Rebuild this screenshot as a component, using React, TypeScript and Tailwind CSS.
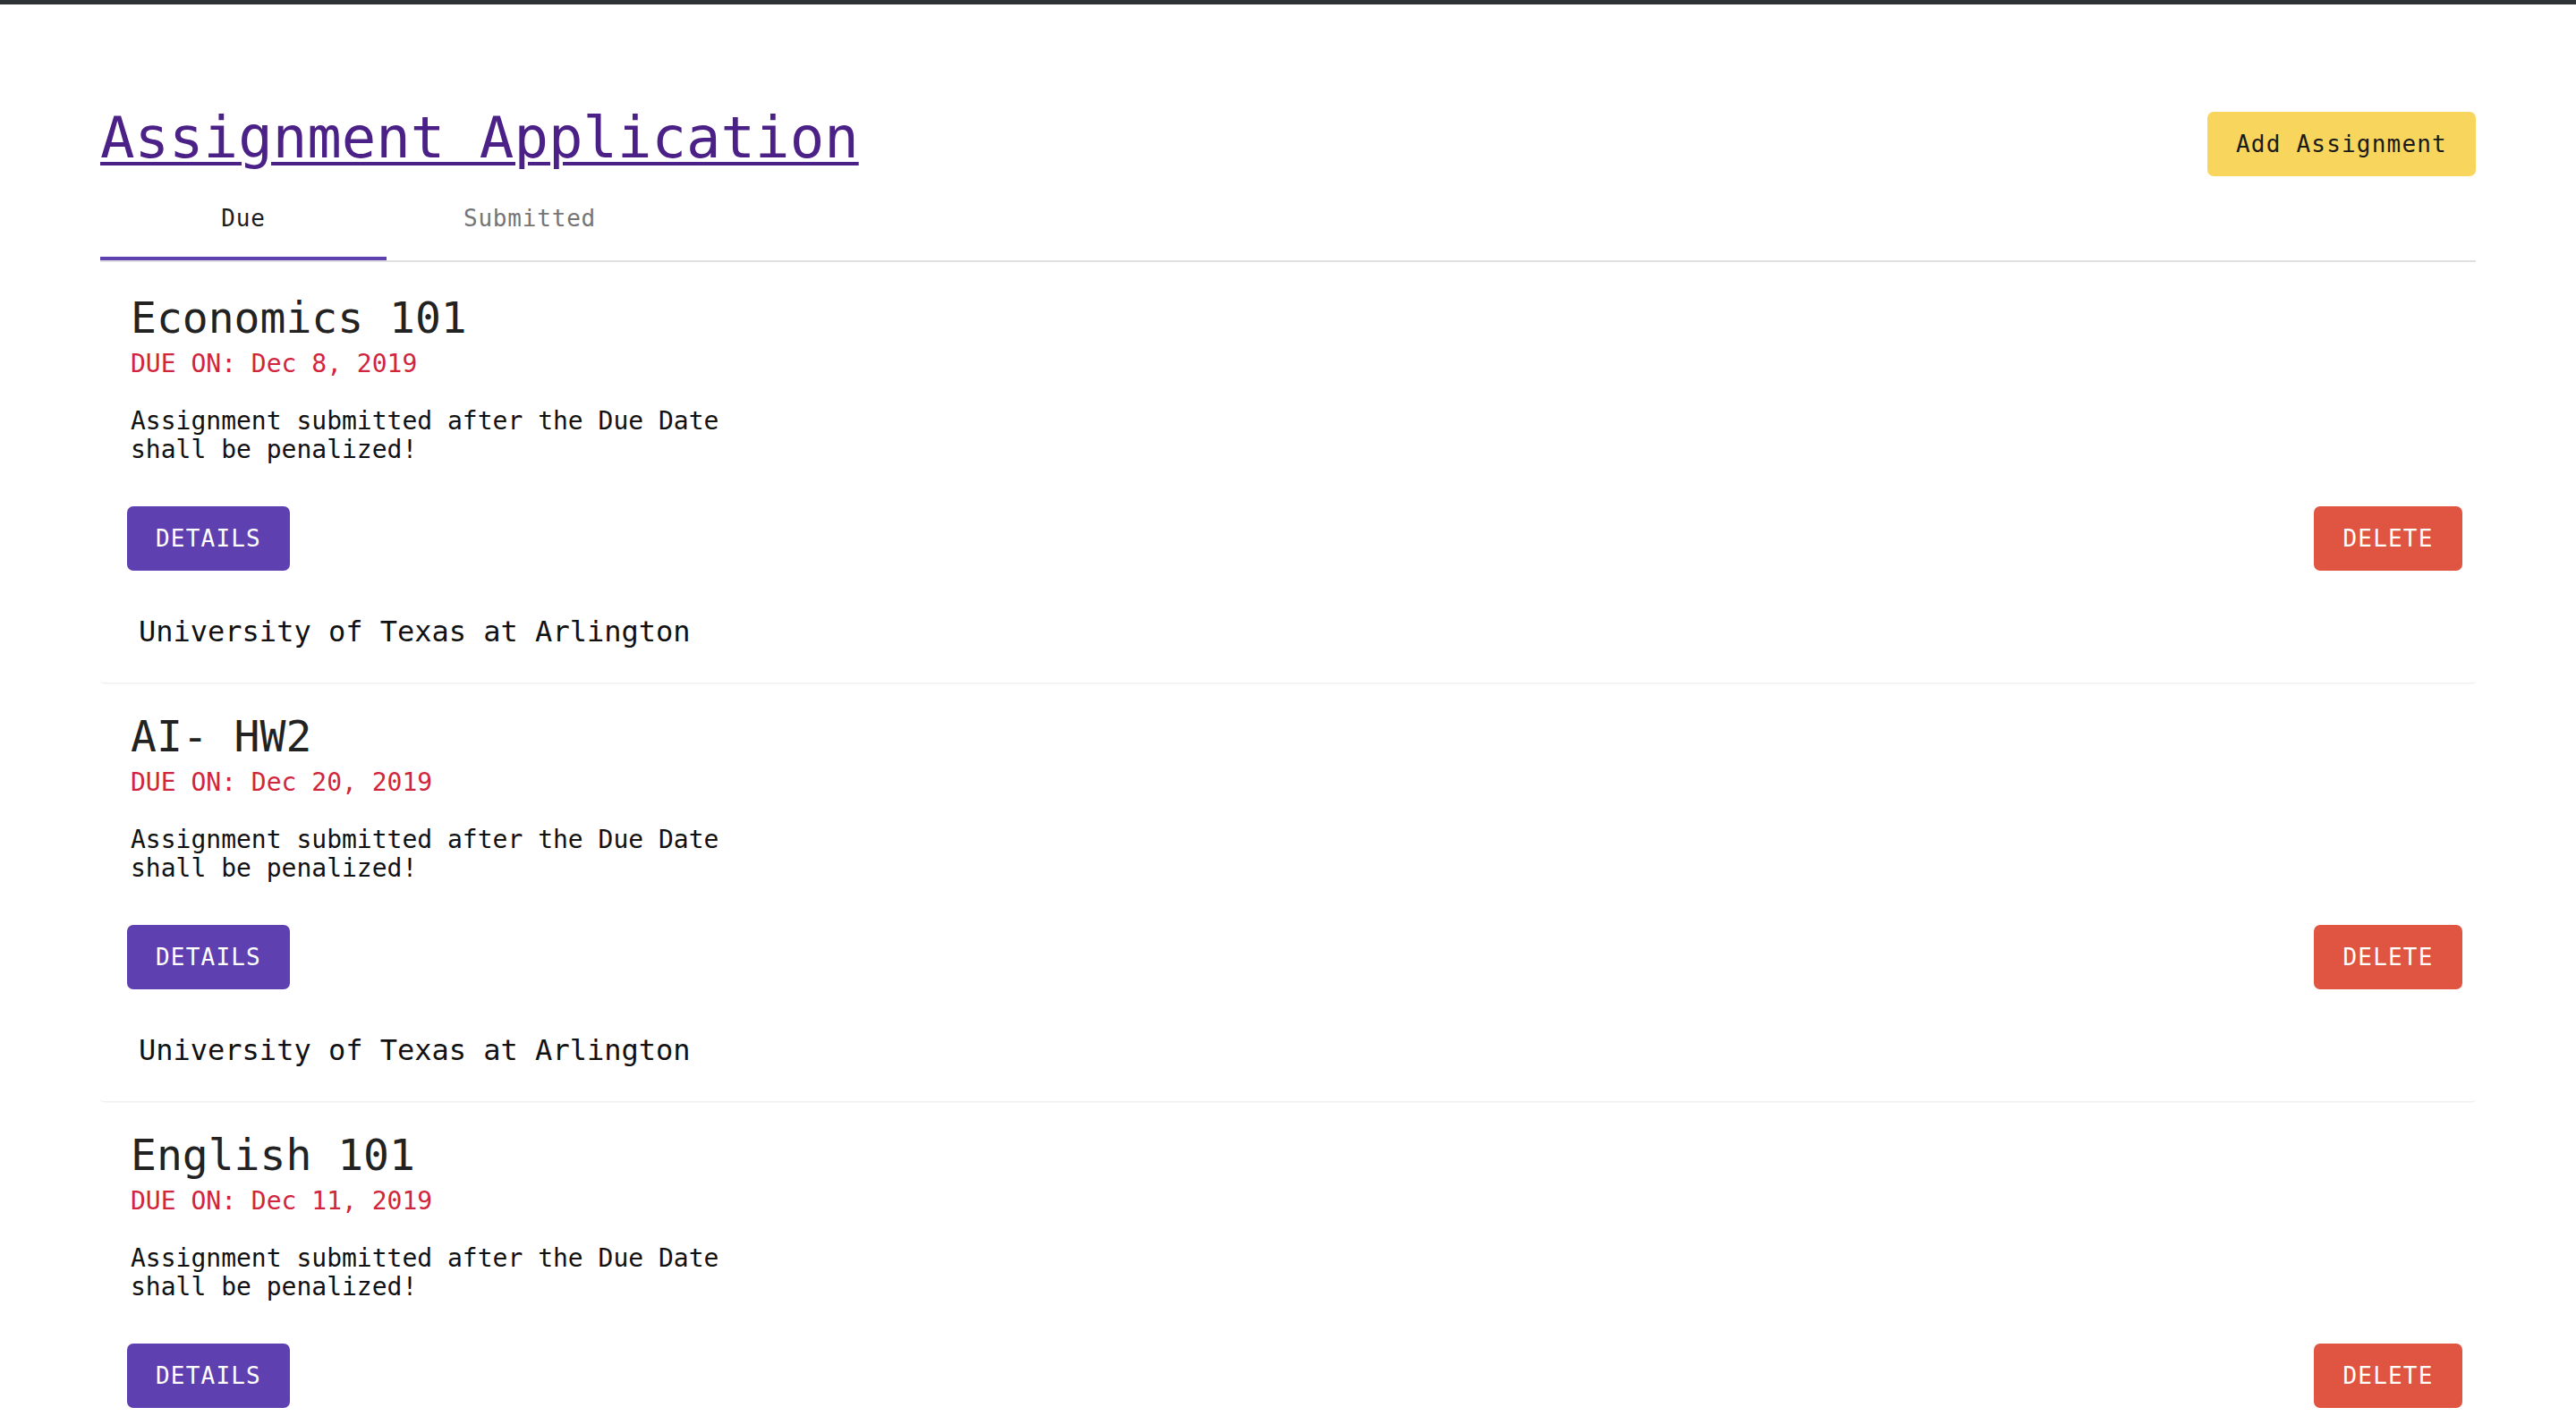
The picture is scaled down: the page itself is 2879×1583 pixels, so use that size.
import { FC } from "react";

type Assignment = {
  id: number;
  title: string;
  dueOn: string;
  school: string;
};

const assignments: Assignment[] = [
  { id: 1, title: "Economics 101", dueOn: "Dec 8, 2019", school: "University of Texas at Arlington" },
  { id: 2, title: "AI- HW2", dueOn: "Dec 20, 2019", school: "University of Texas at Arlington" },
  { id: 3, title: "English 101", dueOn: "Dec 11, 2019", school: "University of Texas at Arlington" },
];

const AssignmentCard: FC<{ item: Assignment }> = ({ item }) => {
  return (
    <div className="pt-[31px] pb-[39px] border-b border-[#efefef] rounded-b-[4px] shadow-[0_1px_1px_rgba(0,0,0,0.03)]">
      <div className="pl-[34px]">
        <h2 className="text-[48px] leading-[56px] text-[#222222] whitespace-pre">{item.title}</h2>
        <p className="mt-[8px] text-[28px] leading-[32px] text-[#d0263d]">DUE ON: {item.dueOn}</p>
        <p className="mt-[32px] w-[700px] text-[28px] leading-[32px] text-[#111111]">
          Assignment submitted after the Due Date shall be penalized!
        </p>
      </div>

      {/* Actions */}
      <div className="mt-[47px] flex items-center justify-between pl-[30px] pr-[15px]">
        <button className="w-[182px] h-[72px] rounded-[7px] bg-[#5f40b0] text-white text-[26px] tracking-[1.2px] flex items-center justify-center">
          DETAILS
        </button>
        <button className="w-[166px] h-[72px] rounded-[7px] bg-[#e05542] text-white text-[26px] tracking-[1.2px] flex items-center justify-center">
          DELETE
        </button>
      </div>

      <p className="mt-[50px] pl-[43px] text-[32px] leading-[36px] text-[#111111]">{item.school}</p>
    </div>
  );
};

const App: FC = () => {
  return (
    <div className="min-h-screen bg-white font-['DejaVu_Sans_Mono',monospace]">
      <div className="h-[5px] bg-[#2f3235]" />

      <div className="px-[112px] pt-[111px]">
        {/* Header */}
        <div className="h-[76px] flex items-start justify-between">
          <h1 className="text-[64px] leading-[76px] text-[#4b2087] underline decoration-[4px] underline-offset-[5px]">
            Assignment Application
          </h1>
          <button className="mt-[9px] w-[300px] h-[72px] rounded-[7px] bg-[#f8d65e] text-[#1a1a1a] text-[26px] tracking-[1.2px] flex items-center justify-center">
            Add Assignment
          </button>
        </div>

        {/* Tabs */}
        <div className="mt-[6px] flex border-b-2 border-[#e0e0e0]">
          <div className="w-[320px] h-[93px] pt-[3px] flex items-center justify-center border-b-4 border-[#5f41b2] text-[26px] leading-[30px] tracking-[0.8px] text-[#1d1d1d]">
            Due
          </div>
          <div className="w-[320px] h-[93px] pt-[3px] flex items-center justify-center border-b-4 border-transparent text-[26px] leading-[30px] tracking-[0.8px] text-[#757575]">
            Submitted
          </div>
        </div>

        {/* Cards */}
        <div className="mt-[3px]">
          {assignments.map((a) => (
            <AssignmentCard key={a.id} item={a} />
          ))}
        </div>
      </div>
    </div>
  );
};

export default App;
